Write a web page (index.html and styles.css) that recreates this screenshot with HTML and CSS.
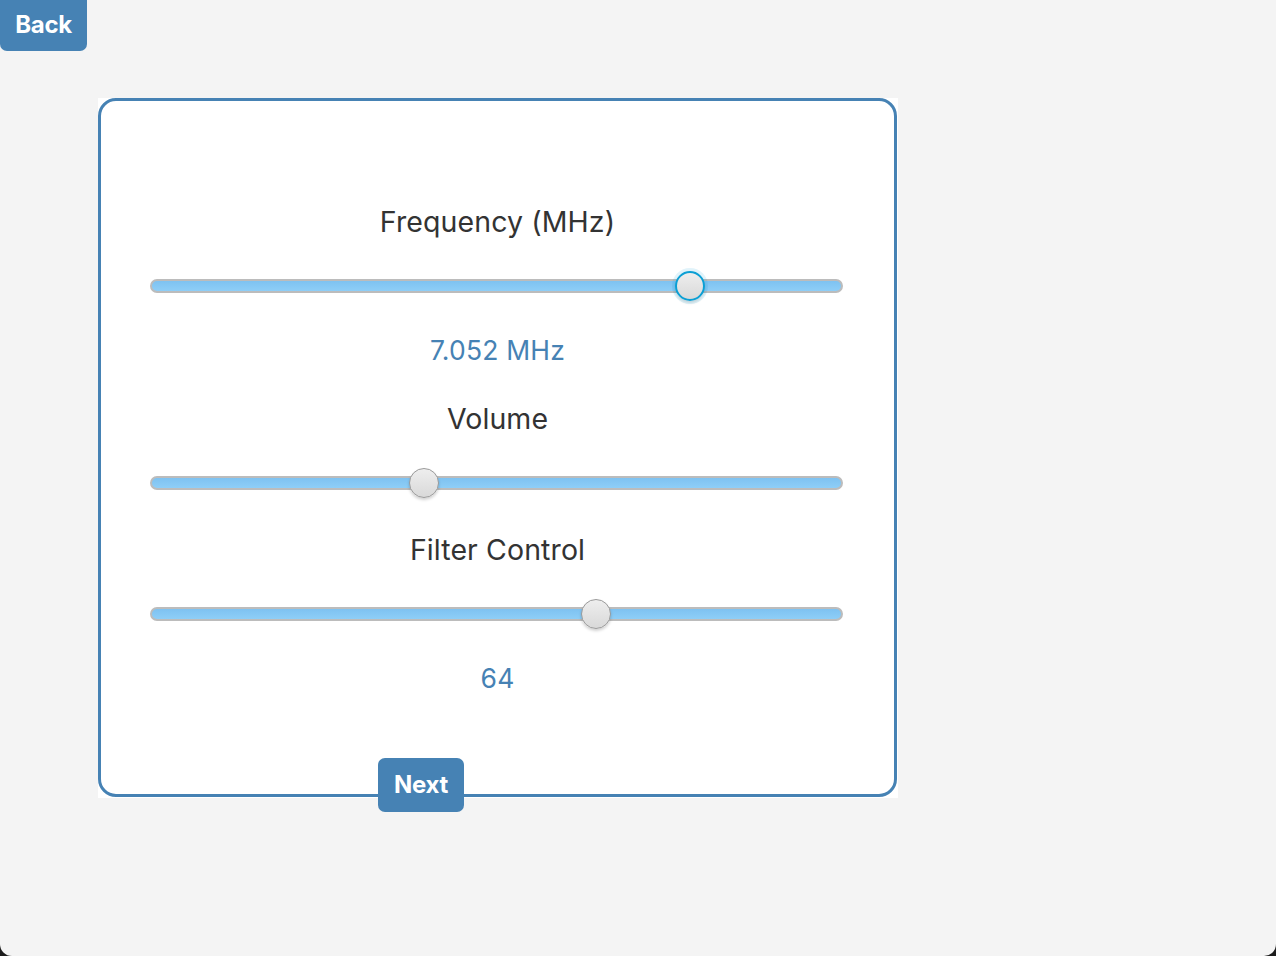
FILE: index.html
```html
<!DOCTYPE html>
<html>
<head>
<meta charset="utf-8">
<link rel="stylesheet" href="styles.css">
</head>
<body>
<div class="window">
  <button class="btn back">Back</button>
  <div class="card-bg">
    <div class="card">
      <div class="row label first">Frequency (MHz)</div>
      <div class="row slider">
        <div class="track"></div>
        <div class="thumb focused" style="left: 525px"></div>
      </div>
      <div class="row value">7.052 MHz</div>
      <div class="row label vol">Volume</div>
      <div class="row slider">
        <div class="track"></div>
        <div class="thumb" style="left: 259px"></div>
      </div>
      <div class="row label filt">Filter Control</div>
      <div class="row slider">
        <div class="track"></div>
        <div class="thumb" style="left: 431px"></div>
      </div>
      <div class="row value">64</div>
      <button class="btn next">Next</button>
    </div>
  </div>
</div>
</body>
</html>
```
FILE: styles.css
```css
html {
  background: #1c1c1c;
}
body {
  margin: 0;
  font-family: Inter, "Liberation Sans", sans-serif;
}
.window {
  width: 1276px;
  height: 956px;
  background: #f4f4f4;
  border-radius: 0 0 12px 12px;
  overflow: hidden;
  display: flex;
  flex-direction: column;
  align-items: flex-start;
}
.btn {
  background: #4682b4;
  color: #ffffff;
  border: none;
  font-family: Inter, "Liberation Sans", sans-serif;
  font-weight: 700;
  font-size: 24px;
  padding: 0 0 2px 0;
  display: flex;
  align-items: center;
  justify-content: center;
  letter-spacing: -0.3px;
}
.back {
  width: 87px;
  height: 51px;
  border-radius: 0 0 7px 7px;
}
.card-bg {
  margin-top: 47px;
  margin-left: 98px;
  width: 800px;
  height: 700px;
  background: #ffffff;
}
.card {
  width: 799px;
  height: 699px;
  box-sizing: border-box;
  border: 3px solid #4682b4;
  border-radius: 18px;
  padding-top: 89px;
  display: flex;
  flex-direction: column;
  align-items: stretch;
}
.row {
  height: 64px;
  flex: none;
}
.label {
  line-height: 64px;
  text-align: center;
  font-size: 28.5px;
  color: #333333;
  letter-spacing: 0.1px;
}
.vol {
  margin-top: 5px;
}
.filt {
  margin-top: 3px;
}
.value {
  line-height: 64px;
  text-align: center;
  font-size: 26.5px;
  color: #4682b4;
  letter-spacing: 0.2px;
}
.slider {
  position: relative;
  margin-left: 49px;
  margin-right: 51px;
  display: flex;
  align-items: center;
}
.track {
  flex: 1;
  height: 14px;
  box-sizing: border-box;
  border: 2px solid #bcbcbc;
  border-radius: 7px;
  background: linear-gradient(#7ec2f1, #8ecef7);
}
.thumb {
  position: absolute;
  top: 17px;
  width: 30px;
  height: 30px;
  box-sizing: border-box;
  border-radius: 50%;
  border: 1.5px solid #9a9a9a;
  background: linear-gradient(#eeeeee, #d9d9d9);
  box-shadow: 0 2px 3px rgba(0, 0, 0, 0.18);
}
.thumb.focused {
  border: 2px solid #0b9fd4;
  box-shadow: 0 0 0 3px rgba(11, 159, 212, 0.12), 0 2px 3px rgba(0, 0, 0, 0.15);
}
.next {
  align-self: flex-start;
  margin-top: 48px;
  margin-left: 277px;
  width: 86px;
  height: 54px;
  border-radius: 7px;
  flex: none;
}
```
